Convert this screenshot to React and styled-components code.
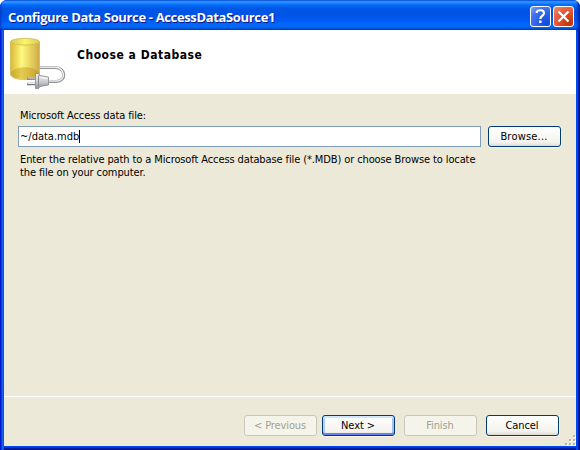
import React from 'react';
import styled, { createGlobalStyle, css } from 'styled-components';

const Global = createGlobalStyle`
  * { box-sizing: border-box; }
  body { margin: 0; background: #fff; overflow: hidden; }
`;

const Window = styled.main`
  width: 580px;
  height: 450px;
  display: flex;
  flex-direction: column;
  border-radius: 7px 7px 0 0;
  overflow: hidden;
  background: #0831d9;
  font: 11px/13px "DejaVu Sans Condensed", "DejaVu Sans", sans-serif;
  font-stretch: condensed;
  color: #000;
`;

const TitleBar = styled.header`
  height: 30px;
  flex: none;
  display: flex;
  align-items: center;
  gap: 2px;
  padding: 3px 6px 0 8px;
  background: linear-gradient(180deg, #0058e6 0, #3a93ff 4%, #288eff 8%, #127dff 12%, #036ffc 16%, #0262ee 22%, #0057e5 30%, #0054e3 40%, #0055eb 58%, #005bf5 68%, #026afe 84%, #0062ef 92%, #0052d6 96%, #003dbb 100%);
  box-shadow: inset 2px 0 3px -1px #0036c0, inset -3px 0 3px -1px #001f9c;
`;

const Title = styled.h1`
  flex: 1;
  margin: 0;
  font: bold 13px/18px "Open Sans", "Noto Sans", sans-serif;
  letter-spacing: -0.35px;
  white-space: nowrap;
  color: #fff;
  text-shadow: 1px 1px 0 #0a1883;
`;

const CaptionButton = styled.button`
  width: 21px;
  height: 21px;
  padding: 0;
  border: 1px solid #fff;
  border-radius: 3px;
  display: grid;
  place-items: center;
  background: ${({ $close }) => $close
    ? 'radial-gradient(circle at 85% 90%, #c03408 0, #d9451b 35%, #e6603e 65%, #ec9078 100%)'
    : 'radial-gradient(circle at 85% 90%, #0b4ddc 0, #275fe8 40%, #4374ec 70%, #86a5f4 100%)'};
`;

const Body = styled.div`
  flex: 1;
  display: flex;
  padding: 0 4px 4px;
  background: linear-gradient(90deg, #0019cf 0 1px, #0a3fdb 1px 2px, #1660e8 2px 3px, #0855dd 3px 4px, transparent 4px 576px, #0048f1 576px 578px, #001ea0 578px 579px, #00138c 579px),
    linear-gradient(180deg, #0048f1 0 calc(100% - 3px), #0036d8 calc(100% - 3px) calc(100% - 2px), #001ea0 calc(100% - 2px) calc(100% - 1px), #00138c calc(100% - 1px));
`;

const Client = styled.div`
  flex: 1;
  min-width: 0;
  display: flex;
  flex-direction: column;
  background: #ece9d8;
`;

const Banner = styled.section`
  height: 64px;
  flex: none;
  display: flex;
  align-items: flex-start;
  background: #fff;
`;

const BannerIcon = styled.svg`
  width: 64px;
  height: 60px;
  margin-left: 4px;
  flex: none;
`;

const Heading = styled.h2`
  margin: 18px 0 0 5px;
  font: bold 12px/15px "DejaVu Sans Condensed", "DejaVu Sans", sans-serif;
  font-stretch: condensed;
  letter-spacing: 0.52px;
`;

const Form = styled.section`
  flex: 1;
  padding: 15px 15px 0 14px;
`;

const Label = styled.label`
  display: block;
  padding-left: 2px;
  margin-bottom: 4px;
  letter-spacing: -0.11px;
`;

const FieldRow = styled.div`
  display: flex;
  gap: 7px;
`;

const PathField = styled.div`
  width: 463px;
  height: 21px;
  display: flex;
  align-items: center;
  padding: 0 1px;
  border: 1px solid #7f9db9;
  background: #fff;
`;

const Caret = styled.span`
  width: 1px;
  height: 13px;
  background: #000;
`;

const Hint = styled.p`
  margin: 6px 0 0 2px;
`;

const HintLine = styled.span`
  display: block;
  white-space: nowrap;
  letter-spacing: -0.11px;
`;

const Button = styled.button`
  width: 73px;
  height: 21px;
  flex: none;
  padding: 0 1px 1px 0;
  border: 1px solid #003c74;
  border-radius: 3px;
  font: inherit;
  letter-spacing: ${({ $spacing }) => $spacing || '-0.1px'};
  color: #000;
  background: linear-gradient(#fff, #f4f3ee 80%, #dedbd0);
  box-shadow: 0 1px 0 #f7f5ed, 1px 0 0 #f4f1e6;
  ${({ $primary }) => $primary && css`
    box-shadow: inset 0 2px 0 #cee7ff, inset 0 -2px 0 #6982ee, inset 2px 0 0 #b5cdf7, inset -2px 0 0 #a5bff3, 0 1px 0 #f7f5ed;
  `}
  &:disabled {
    color: #a1a192;
    border-color: #c9c7ba;
    background: #f5f4ea;
    box-shadow: none;
  }
`;

const Footer = styled.footer`
  height: 50px;
  flex: none;
  display: flex;
  align-items: flex-start;
  padding: 18px 0 0 240px;
  border-top: 1px solid #fff;
`;

const Pair = styled.div`
  display: flex;
  gap: ${({ $gap }) => $gap}px;
  & + & { margin-left: 9px; }
`;

const Grip = styled.svg`
  width: 12px;
  height: 12px;
  margin-left: auto;
  align-self: flex-end;
`;

function DatabaseIcon() {
  return (
    <BannerIcon viewBox="8 30 64 60" aria-hidden="true">
      <defs>
        <linearGradient id="side">
          <stop offset="0" stopColor="#d8b944" />
          <stop offset=".18" stopColor="#ead653" />
          <stop offset=".38" stopColor="#fcf87e" />
          <stop offset=".6" stopColor="#f0df68" />
          <stop offset="1" stopColor="#cda94b" />
        </linearGradient>
        <linearGradient id="top">
          <stop offset="0" stopColor="#d9c94a" />
          <stop offset=".5" stopColor="#faf56b" />
          <stop offset="1" stopColor="#dccb51" />
        </linearGradient>
        <linearGradient id="plug" x2="0" y2="1">
          <stop offset="0" stopColor="#f5f5f5" />
          <stop offset=".5" stopColor="#d0d1d4" />
          <stop offset="1" stopColor="#909298" />
        </linearGradient>
      </defs>
      <path d="M10.500 42v32c0 7.500 29 7.500 29 0V42z" fill="url(#side)" stroke="#d0b54e" strokeWidth=".8" />
      <path d="M11 74c0-9 28-9 28 0 0 6.500-28 6.500-28 0z" fill="#bd9010" opacity=".42" />
      <ellipse cx="25" cy="41.700" rx="14.500" ry="3.300" fill="url(#top)" stroke="#cbb94c" strokeWidth=".8" />
      <path d="M40 67.500h15c11 0 12 14 1 14h-7" fill="none" stroke="#929294" strokeWidth="3" />
      <path d="M40 67.300h15c10.500 0 11.500 13.800 1 13.800h-7" fill="none" stroke="#ededee" strokeWidth="1.500" />
      <path d="M27 78.500h8M27 84h8" stroke="#77787b" strokeWidth="2.600" />
      <path d="M27.500 78h8M27.500 83.500h8" stroke="#ededed" strokeWidth="1" />
      <path d="M35.500 73.500h3l1 2 9 1.500v8l-8.500 1.500-1.500 2h-3z" fill="url(#plug)" stroke="#85868a" strokeWidth=".8" />
      <path d="M38.500 75.500v11" stroke="#88898d" strokeWidth="1" />
      <path d="M40.500 77.500l7 1" stroke="#fff" strokeWidth="1" />
    </BannerIcon>
  );
}

const gripDots = [[9, 1], [5, 5], [9, 5], [1, 9], [5, 9], [9, 9]];

export default function App() {
  return (
    <>
      <Global />
      <Window>
        <TitleBar>
          <Title>Configure Data Source - AccessDataSource1</Title>
          <CaptionButton aria-label="Help">
            <svg width="19" height="19" viewBox="0 0 19 19">
              <path d="M5.700 6V4.700C6.800 2.700 13 2.500 13 6c0 3-3.700 2.900-3.700 6" fill="none" stroke="#fff" strokeWidth="2.100" />
              <path d="M8.100 13.500h2.400v2.400H8.100z" fill="#fff" />
            </svg>
          </CaptionButton>
          <CaptionButton $close aria-label="Close">
            <svg width="19" height="19" viewBox="0 0 19 19">
              <path d="M4.500 4.500l10 10M14.500 4.500l-10 10" stroke="#fff" strokeWidth="2.200" />
            </svg>
          </CaptionButton>
        </TitleBar>
        <Body>
          <Client>
            <Banner>
              <DatabaseIcon />
              <Heading>Choose a Database</Heading>
            </Banner>
            <Form>
              <Label>Microsoft Access data file:</Label>
              <FieldRow>
                <PathField role="textbox">~/data.mdb<Caret /></PathField>
                <Button $spacing="0.2px">Browse...</Button>
              </FieldRow>
              <Hint>
                <HintLine>Enter the relative path to a Microsoft Access database file (*.MDB) or choose Browse to locate</HintLine>
                <HintLine>the file on your computer.</HintLine>
              </Hint>
            </Form>
            <Footer>
              <Pair $gap={5}>
                <Button disabled>&lt; Previous</Button>
                <Button $primary>Next &gt;</Button>
              </Pair>
              <Pair $gap={9}>
                <Button disabled>Finish</Button>
                <Button>Cancel</Button>
              </Pair>
              <Grip viewBox="0 0 12 12">
                {gripDots.map(([x, y]) => (
                  <g key={`${x}-${y}`}>
                    <path d={`M${x + 1} ${y + 1}h2v2h-2z`} fill="#fff" />
                    <path d={`M${x} ${y}h2v2h-2z`} fill="#b8b4a3" />
                  </g>
                ))}
              </Grip>
            </Footer>
          </Client>
        </Body>
      </Window>
    </>
  );
}
